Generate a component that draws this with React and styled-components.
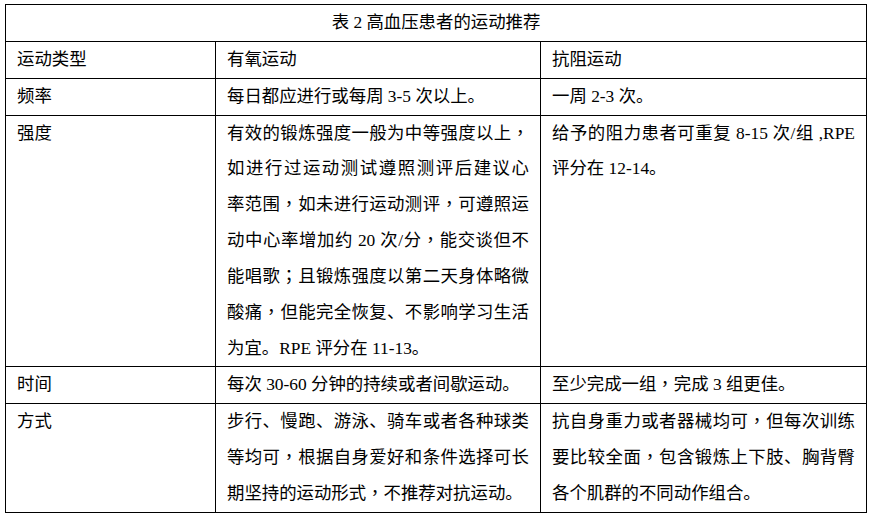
import React from "react";
import styled, { createGlobalStyle } from "styled-components";

const GlobalStyle = createGlobalStyle`
  html, body {
    margin: 0;
    padding: 0;
    background: #fff;
  }
  body {
    font-family: "Liberation Serif", "Noto Sans CJK SC", serif;
    color: #000;
  }
`;

const rows = [
  {
    label: ["运动类型"],
    aerobic: ["有氧运动"],
    resist: ["抗阻运动"],
  },
  {
    label: ["频率"],
    aerobic: ["每日都应进行或每周 3-5 次以上。"],
    resist: ["一周 2-3 次。"],
  },
  {
    label: ["强度"],
    aerobic: [
      "有效的锻炼强度一般为中等强度以上，",
      "如进行过运动测试遵照测评后建议心",
      "率范围，如未进行运动测评，可遵照运",
      "动中心率增加约 20 次/分，能交谈但不",
      "能唱歌；且锻炼强度以第二天身体略微",
      "酸痛，但能完全恢复、不影响学习生活",
      "为宜。RPE 评分在 11-13。",
    ],
    resist: ["给予的阻力患者可重复 8-15 次/组 ,RPE", "评分在 12-14。"],
  },
  {
    label: ["时间"],
    aerobic: ["每次 30-60 分钟的持续或者间歇运动。"],
    resist: ["至少完成一组，完成 3 组更佳。"],
  },
  {
    label: ["方式"],
    aerobic: [
      "步行、慢跑、游泳、骑车或者各种球类",
      "等均可，根据自身爱好和条件选择可长",
      "期坚持的运动形式，不推荐对抗运动。",
    ],
    resist: [
      "抗自身重力或者器械均可，但每次训练",
      "要比较全面，包含锻炼上下肢、胸背臀",
      "各个肌群的不同动作组合。",
    ],
  },
];

// full-width comma / semicolon sit centred in the reference
const renderText = (text) =>
  text.split(/([，；])/).map((part, i) =>
    part === "，" || part === "；" ? <Punct key={i}>{part}</Punct> : part
  );

const App = () => {
  return (
    <>
      <GlobalStyle />
      <Wrapper>
        <Table>
          <colgroup>
            <Col $width={210} />
            <Col $width={325} />
            <Col $width={326} />
          </colgroup>
          <tbody>
            <tr>
              <TitleCell colSpan={3}>表 2 高血压患者的运动推荐</TitleCell>
            </tr>
            {rows.map((row, i) => (
              <tr key={i}>
                {[row.label, row.aerobic, row.resist].map((lines, j) => (
                  <Cell key={j}>
                    {lines.map((text, k) => (
                      <Line key={k} $last={k === lines.length - 1}>
                        {renderText(text)}
                      </Line>
                    ))}
                  </Cell>
                ))}
              </tr>
            ))}
          </tbody>
        </Table>
      </Wrapper>
    </>
  );
};

export default App;

const Wrapper = styled.div`
  padding: 4px 0 0 5px;
`;

const Table = styled.table`
  border-collapse: collapse;
  table-layout: fixed;
  width: 861px;
  font-size: 17.4px;
  line-height: 35.85px;
`;

const Col = styled.col`
  width: ${(p) => p.$width}px;
`;

const TitleCell = styled.td`
  border: 1px solid #000;
  padding: 0 11px;
  text-align: center;
  vertical-align: middle;
`;

const Cell = styled.td`
  border: 1px solid #000;
  padding: 0 11px;
  vertical-align: top;
`;

const Line = styled.span`
  display: block;
  white-space: nowrap;
  text-align: justify;
  text-align-last: ${(p) => (p.$last ? "left" : "justify")};
`;

const Punct = styled.span`
  font-family: "Noto Sans CJK TC", sans-serif;
  line-height: 1;
`;
